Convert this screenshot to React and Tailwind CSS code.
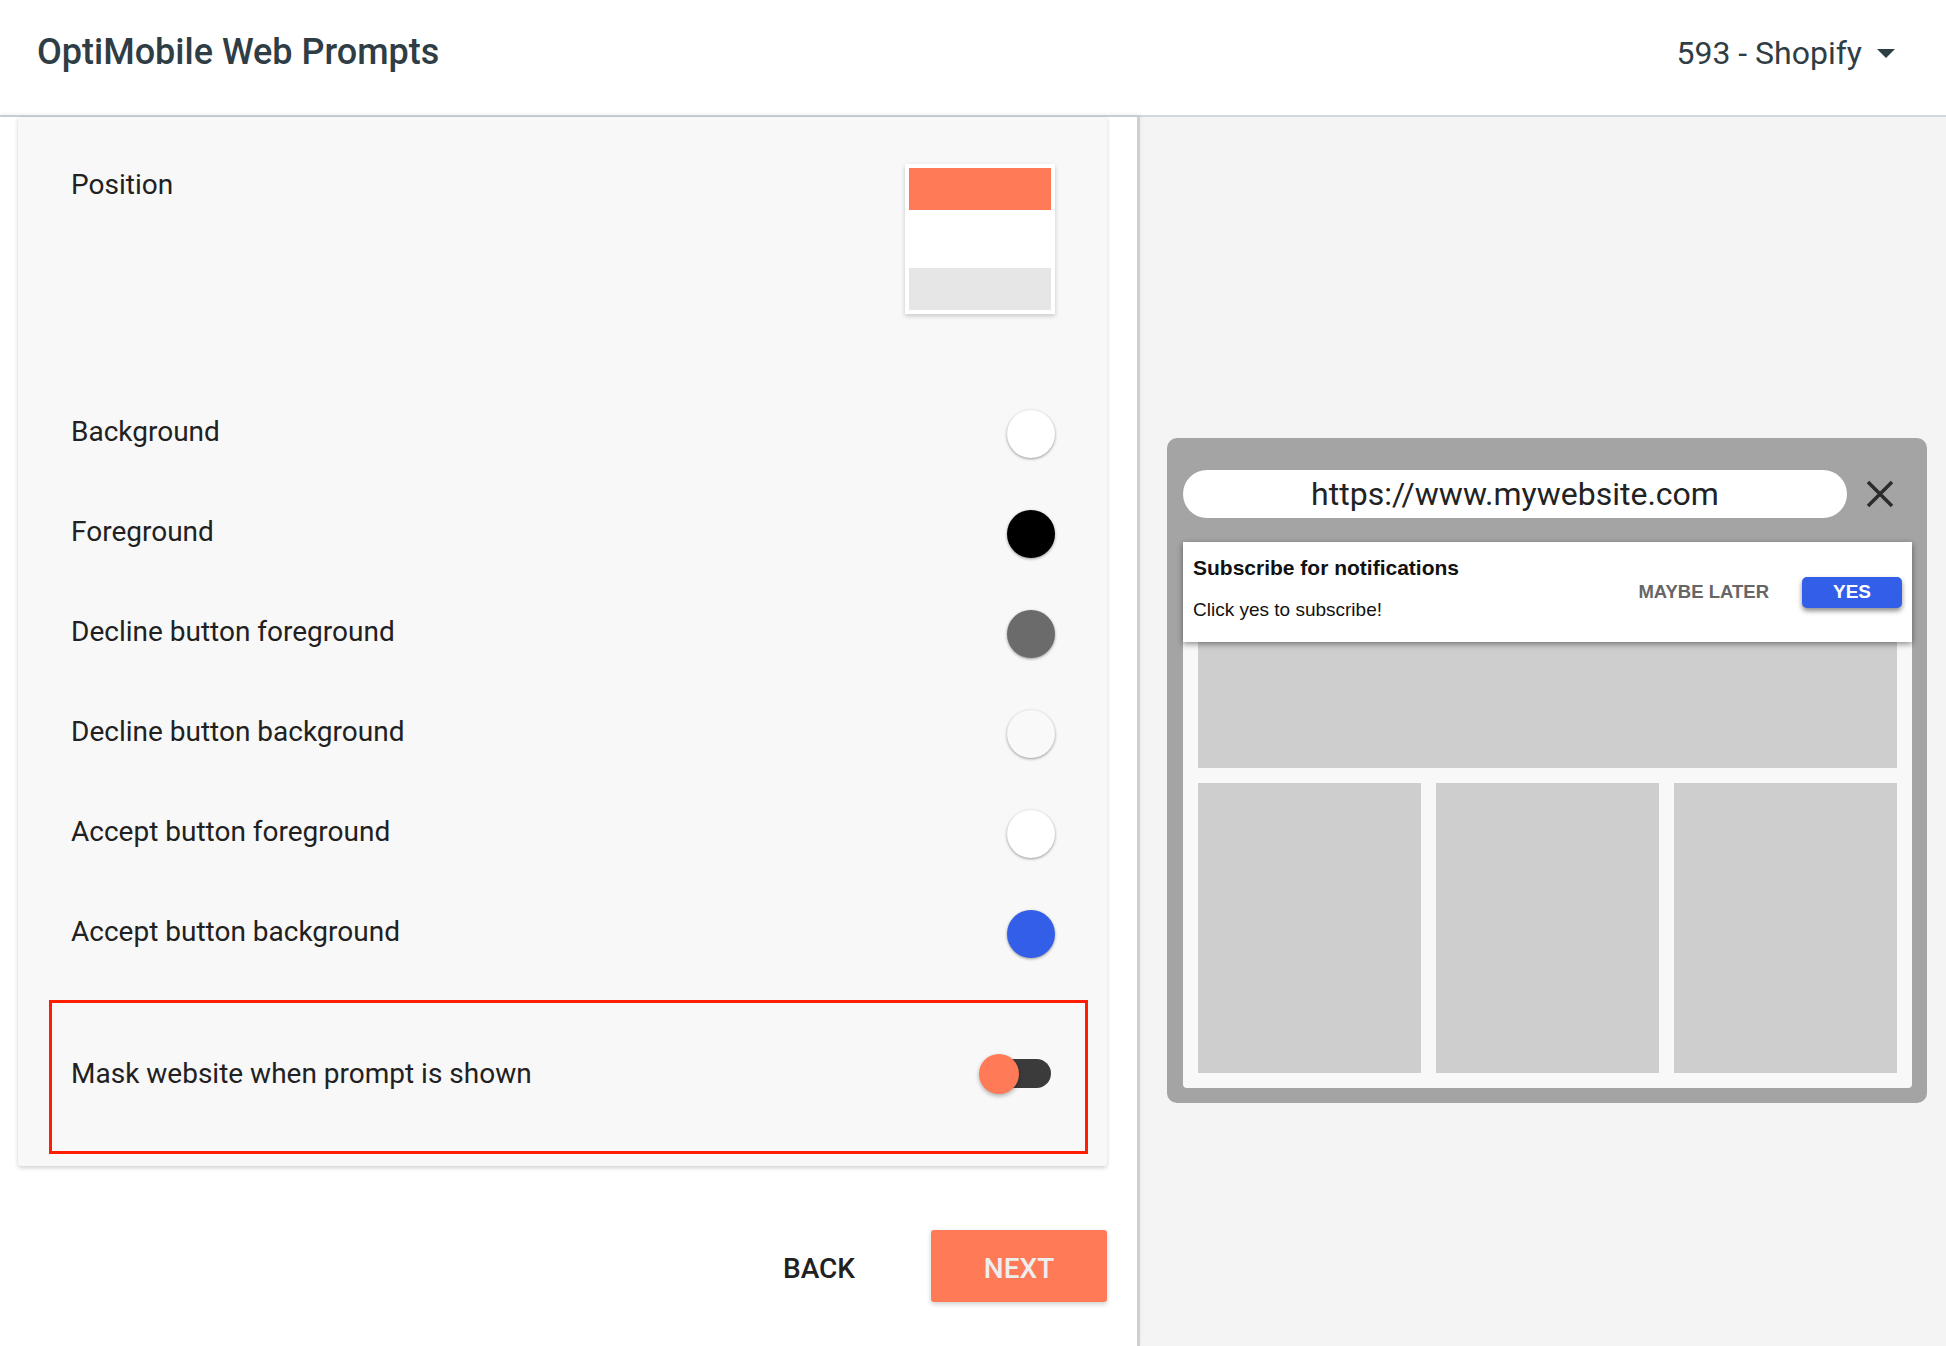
const colorRows = [
  { label: 'Background', color: 'bg-white' },
  { label: 'Foreground', color: 'bg-black' },
  { label: 'Decline button foreground', color: 'bg-[#6b6b6b]' },
  { label: 'Decline button background', color: 'bg-[#f9f9f9]' },
  { label: 'Accept button foreground', color: 'bg-white' },
  { label: 'Accept button background', color: 'bg-[#335ee8]' },
];

function Swatch({ color }) {
  return (
    <div
      className={`w-12 h-12 rounded-full ${color} shadow-[0_1px_3px_rgba(0,0,0,0.4)]`}
    />
  );
}

function Toggle() {
  return (
    <div className="relative w-[72px] h-10">
      <div className="absolute right-0 top-[5px] w-[56px] h-[29px] rounded-full bg-[#3b3b3b]" />
      <div className="absolute left-0 top-0 w-10 h-10 rounded-full bg-[#ff7b57] shadow-[0_2px_4px_rgba(0,0,0,0.3)]" />
    </div>
  );
}

function Preview() {
  return (
    <div className="ml-[27px] mr-[19px] mt-[321px] rounded-[10px] bg-[#a4a4a4] pl-4 pr-[15px] pt-8 pb-[15px]">
      {/* Address bar */}
      <div className="flex items-center">
        <div className="flex-1 h-12 rounded-full bg-white flex items-center justify-center text-[32px] text-[#222] leading-none">
          https://www.mywebsite.com
        </div>
        <div className="w-[65px] flex justify-center">
          <svg width="28" height="28" viewBox="0 0 28 28" fill="none" stroke="#2b2b2b" strokeWidth="3.5">
            <path d="M2 2 L26 26 M26 2 L2 26" />
          </svg>
        </div>
      </div>

      {/* Website mock */}
      <div className="relative mt-6 bg-[#f8f8f8] rounded-b-[4px] p-[15px] flex flex-col gap-[15px] font-['Liberation_Sans',Arial,sans-serif]">
        <div className="h-[211px] bg-[#cecece]" />
        <div className="grid grid-cols-3 gap-[15px] h-[290px]">
          <div className="bg-[#cecece]" />
          <div className="bg-[#cecece]" />
          <div className="bg-[#cecece]" />
        </div>

        {/* Prompt overlay */}
        <div className="absolute top-0 left-0 right-0 h-[100px] bg-white shadow-[0_2px_6px_rgba(0,0,0,0.45)] flex items-center justify-between pl-[10px] pr-[10px]">
          <div className="self-start pt-[14px]">
            <div className="text-[21px] leading-[24px] font-bold text-[#111]">Subscribe for notifications</div>
            <div className="mt-[19px] text-[19px] leading-[22px] text-[#111]">Click yes to subscribe!</div>
          </div>
          <div className="flex items-center gap-[33px]">
            <span className="text-[18.5px] font-bold text-[#666]">MAYBE LATER</span>
            <button className="w-[100px] h-[31px] rounded-[5px] bg-[#335ee8] text-white text-[19px] font-bold shadow-[0_3px_5px_rgba(0,0,0,0.45)]">
              YES
            </button>
          </div>
        </div>
      </div>
    </div>
  );
}

export default function App() {
  return (
    <div className="w-[1946px] h-[1346px] flex flex-col bg-white font-['Roboto',sans-serif] overflow-hidden">
      {/* Header */}
      <div className="h-[117px] shrink-0 bg-white border-b-2 border-[#cfd8dc] flex items-start justify-between pl-[37px] pr-[51px] pt-[34px]">
        <h1 className="text-[36px] leading-9 font-medium text-[#2f3d45]">OptiMobile Web Prompts</h1>
        <div className="flex items-center gap-[15px] text-[#2f3d45] pt-[3px]">
          <span className="text-[32px] leading-8">593 - Shopify</span>
          <svg width="18" height="9" viewBox="0 0 18 9">
            <path d="M0 0 H18 L9 9 Z" fill="#2f3d45" />
          </svg>
        </div>
      </div>

      <div className="flex flex-1 min-h-0">
        {/* Settings column */}
        <div className="relative z-10 w-[1140px] shrink-0 bg-white border-r-[3px] border-[#cfcfcf] shadow-[0_-3px_4px_rgba(0,0,0,0.06)] flex flex-col">
          <div className="ml-[18px] mr-[30px] bg-[#f8f8f8] shadow-[0_2px_4px_rgba(0,0,0,0.18)] rounded-b-[3px] pt-[47px] pb-3">
            {/* Position */}
            <div className="flex items-start justify-between pl-[53px] pr-[52px]">
              <span className="mt-[7px] text-[28px] leading-7 text-[#212121]">Position</span>
              <div className="w-[150px] h-[150px] bg-white p-1 flex flex-col justify-between shadow-[0_2px_5px_rgba(0,0,0,0.2)]">
                <div className="h-[42px] bg-[#ff7b57]" />
                <div className="h-[42px] bg-[#e6e6e6]" />
              </div>
            </div>

            {/* Colours */}
            <div className="mt-[70px]">
              {colorRows.map((row) => (
                <div key={row.label} className="h-[100px] flex items-center justify-between pl-[53px] pr-[52px]">
                  <span className="text-[28px] leading-7 text-[#212121] -mt-1">{row.label}</span>
                  <Swatch color={row.color} />
                </div>
              ))}
            </div>

            {/* Mask toggle */}
            <div className="mt-4 ml-[31px] mr-[19px] h-[154px] border-[3px] border-[#ff1f00] flex items-center justify-between pl-[19px] pr-[34px] pb-[6px]">
              <span className="text-[28px] leading-7 text-[#212121]">Mask website when prompt is shown</span>
              <Toggle />
            </div>
          </div>

          {/* Actions */}
          <div className="mt-16 flex items-center justify-end mr-[30px]">
            <button className="mr-[76px] pt-[5px] text-[28px] font-medium text-[#212121]">BACK</button>
            <button className="w-[176px] h-[72px] pt-[5px] rounded-[3px] bg-[#ff7b57] text-[28px] font-medium text-[#eeeeee] shadow-[0_2px_5px_rgba(0,0,0,0.2)]">
              NEXT
            </button>
          </div>
        </div>

        {/* Preview column */}
        <div className="flex-1 bg-[#f4f4f4]">
          <Preview />
        </div>
      </div>
    </div>
  );
}
